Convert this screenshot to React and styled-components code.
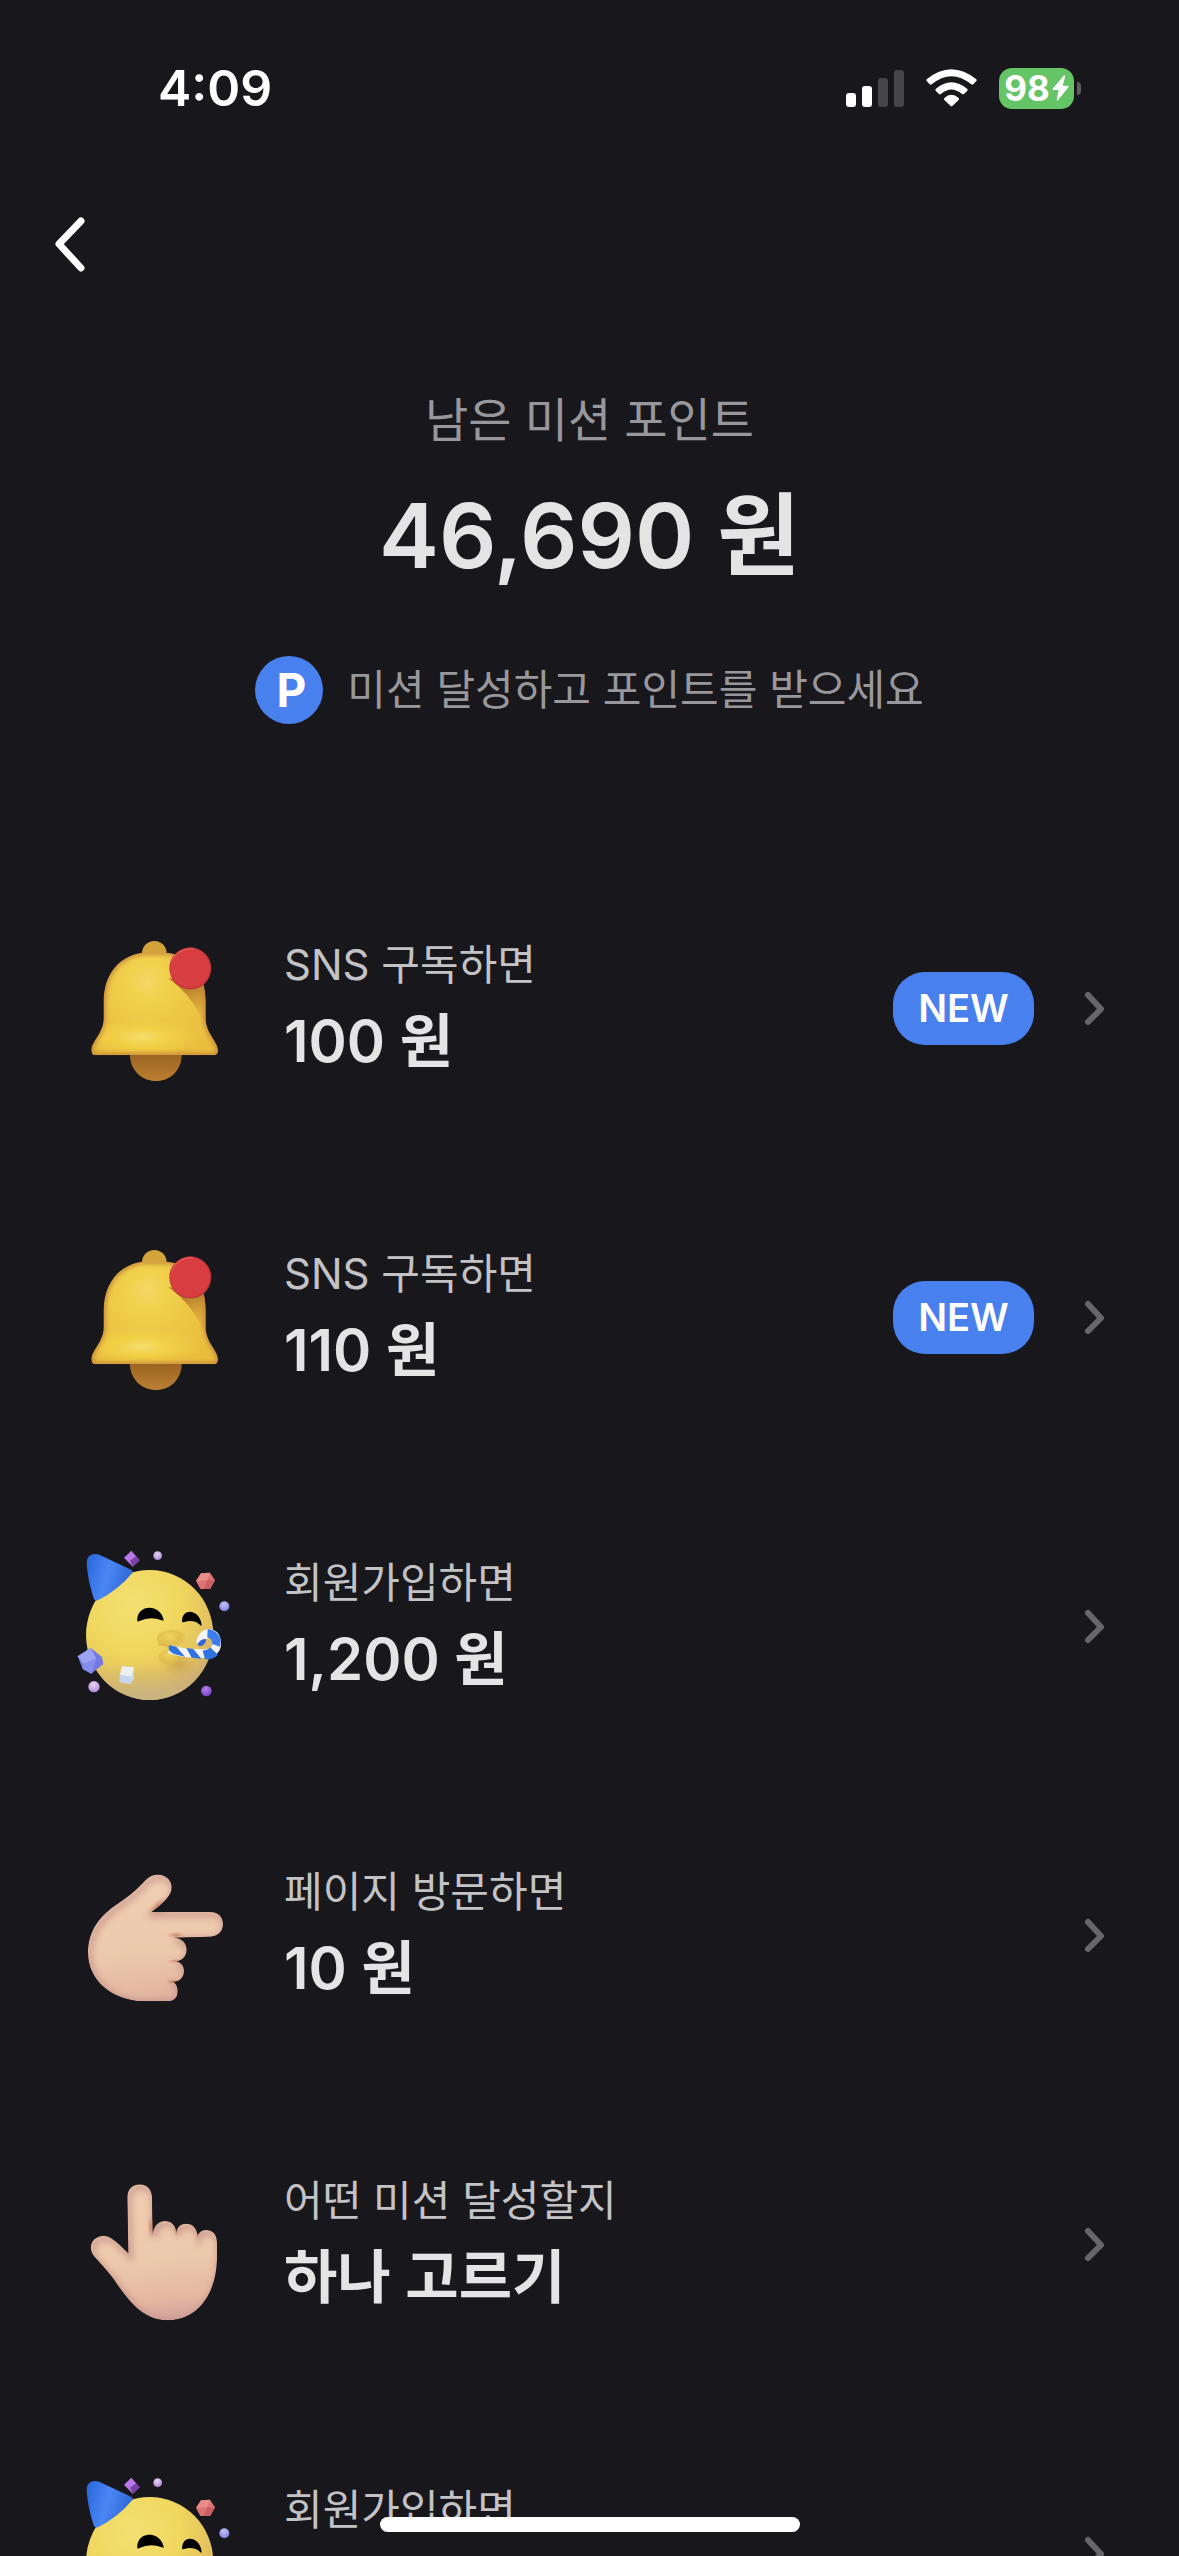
import React from "react";
import styled, { createGlobalStyle } from "styled-components";

const GlobalStyle = createGlobalStyle`
  * { box-sizing: border-box; }
  html, body { margin: 0; background: #18171c; }
  body {
    font-family: Inter, "Noto Sans CJK KR", sans-serif;
    color: #e4e4e4;
    -webkit-font-smoothing: antialiased;
  }
`;

const Screen = styled.div`
  position: relative;
  display: flex;
  flex-direction: column;
  height: 100vh;
  overflow: hidden;
  background: #18171c;
`;

const StatusBar = styled.header`
  display: flex;
  align-items: center;
  justify-content: space-between;
  flex: none;
  height: 176px;
  padding: 0 98px 0 158px;
`;

const Time = styled.time`
  font-size: 50px;
  line-height: 60px;
  font-weight: 600;
  color: #fff;
`;

const StatusIcons = styled.div`
  display: flex;
  align-items: center;
  gap: 22px;
`;

const Signal = styled.div`
  display: flex;
  align-items: flex-end;
  gap: 6px;
  height: 38px;
`;

const SignalBar = styled.span`
  width: 10px;
  height: ${(p) => p.$height}px;
  border-radius: 3px;
  background: ${(p) => (p.$on ? "#fff" : "#464549")};
`;

const Battery = styled.div`
  display: flex;
  align-items: center;
  gap: 3px;
`;

const BatteryBody = styled.div`
  display: flex;
  align-items: center;
  justify-content: center;
  gap: 2px;
  width: 75px;
  height: 41px;
  border-radius: 13px;
  background: #65c466;
  color: #fff;
  font-size: 35px;
  line-height: 41px;
  font-weight: 700;
`;

const BatteryCap = styled.span`
  width: 4px;
  height: 13px;
  border-radius: 0 4px 4px 0;
  background: #5d5c61;
`;

const NavBar = styled.nav`
  display: flex;
  align-items: center;
  flex: none;
  height: 136px;
  padding: 0 30px;
`;

const BackButton = styled.button`
  display: flex;
  align-items: center;
  justify-content: center;
  width: 80px;
  height: 80px;
  padding: 0;
  border: 0;
  background: none;
  cursor: pointer;
`;

const Summary = styled.section`
  display: flex;
  flex-direction: column;
  align-items: center;
  flex: none;
  padding: 72px 40px 130px;
`;

const SummaryTitle = styled.h1`
  margin: 0 0 24px;
  font-size: 47px;
  line-height: 72px;
  font-weight: 400;
  color: #98979b;
`;

const Amount = styled.strong`
  font-size: 90px;
  line-height: 112px;
  font-weight: 600;
`;

const Notice = styled.p`
  display: flex;
  align-items: center;
  gap: 24px;
  margin: 64px 0 0;
  font-size: 42px;
  line-height: 64px;
  color: #98979b;
`;

const PointBadge = styled.span`
  display: flex;
  align-items: center;
  justify-content: center;
  width: 68px;
  height: 68px;
  padding-left: 4px;
  border-radius: 50%;
  background: #4880ee;
  color: #fff;
  font-size: 46px;
  font-weight: 700;
`;

const MissionList = styled.ul`
  flex: 1;
  min-height: 0;
  margin: 0;
  padding: 0;
  overflow-y: auto;
  list-style: none;
  scrollbar-width: none;
`;

const MissionRow = styled.a`
  display: flex;
  align-items: center;
  height: 309px;
  padding: 0 61px 0 70px;
  color: inherit;
  text-decoration: none;
`;

const Artwork = styled.svg`
  flex: none;
  width: 180px;
  height: 180px;
`;

const MissionText = styled.div`
  display: flex;
  flex-direction: column;
  flex: 1;
  min-width: 0;
  min-height: 152px;
  margin-left: 34px;
`;

const MissionLabel = styled.span`
  font-size: 42px;
  line-height: 64px;
  color: #c3c3c6;
`;

const MissionValue = styled.strong`
  font-size: 58px;
  line-height: 88px;
  font-weight: 600;
`;

const NewBadge = styled.span`
  margin-right: 36px;
  width: 141px;
  height: 73px;
  border-radius: 32px;
  background: #4880ee;
  color: #fff;
  font-size: 38px;
  line-height: 72px;
  font-weight: 600;
  text-align: center;
`;

const HomeIndicator = styled.div`
  position: absolute;
  left: 50%;
  bottom: 24px;
  width: 420px;
  height: 15px;
  margin-left: -210px;
  border-radius: 8px;
  background: #fff;
`;

function WifiIcon() {
  return (
    <svg width="51" height="38" viewBox="0 0 153 114" fill="#fff" aria-label="Wi-Fi" role="img">
      <path d="M2 31 Q76 -29 151 31 Q153 34 151 36 L142 46 Q139 48 136 46 Q76 -3 17 46 Q14 48 11 46 L2 36 Q0 34 2 31Z" />
      <path d="M29 60 Q76 20 124 60 Q126 63 124 65 L114 75 Q111 77 108 75 Q76 48 45 75 Q42 77 39 75 L29 65 Q27 63 29 60Z" />
      <path d="M55 87 Q76 68 98 87 Q100 90 98 93 L79 111 Q76 113 74 111 L55 93 Q53 90 55 87Z" />
    </svg>
  );
}

function BoltIcon() {
  return (
    <svg width="17" height="26" viewBox="0 0 51 78" fill="#fff" aria-hidden="true">
      <path d="M36 1 L2 41 Q0 45 4 45 L20 45 L14 75 Q15 79 18 76 L49 37 Q51 32 47 32 L32 32 L40 3 Q39 0 36 1Z" />
    </svg>
  );
}

const BELL =
  "M247 98 H319 C390 103 437 158 437 245 V295 C437 340 474 365 474 391 Q474 406 462 406 H106 Q94 406 94 391 C94 365 131 340 131 295 V245 C131 160 180 107 247 98Z";

function Bell({ id }) {
  const u = (n) => `url(#${id}-${n})`;
  return (
    <Artwork viewBox="30 -3 540 540" aria-hidden="true">
      <defs>
        <radialGradient id={`${id}-body`} gradientUnits="userSpaceOnUse" cx="262" cy="185" r="260">
          <stop offset="0" stopColor="#f4d869" />
          <stop offset=".2" stopColor="#f2d24e" />
          <stop offset=".55" stopColor="#ecc645" />
          <stop offset="1" stopColor="#e9bd3e" />
        </radialGradient>
        <radialGradient id={`${id}-glow`} cx=".5" cy=".5" r=".5">
          <stop offset="0" stopColor="#f7de70" />
          <stop offset=".5" stopColor="#f3d346" stopOpacity=".8" />
          <stop offset="1" stopColor="#f3d346" stopOpacity="0" />
        </radialGradient>
        <linearGradient id={`${id}-shade`} gradientUnits="userSpaceOnUse" x1="395" y1="200" x2="425" y2="320">
          <stop offset="0" stopColor="#b97f2b" />
          <stop offset="1" stopColor="#d9a036" stopOpacity="0" />
        </linearGradient>
        <linearGradient id={`${id}-clap`} x1="0" y1="0" x2="0" y2="1">
          <stop offset="0" stopColor="#98611f" />
          <stop offset="1" stopColor="#bb7f32" />
        </linearGradient>
        <filter id={`${id}-soft`} x="-20%" y="-20%" width="140%" height="140%">
          <feGaussianBlur stdDeviation="7" />
        </filter>
        <clipPath id={`${id}-clip`}>
          <path d={BELL} />
        </clipPath>
      </defs>
      <path d="M210 396 H365 V410 C362 452 330 483 288 483 C246 483 213 452 210 410Z" fill={u("clap")} />
      <circle cx="283" cy="100" r="37" fill="#d3a33c" />
      <g clipPath={u("clip")}>
        <path d={BELL} fill={u("body")} />
        <ellipse cx="245" cy="352" rx="170" ry="55" fill={u("glow")} />
        <path d="M325 175 Q398 225 437 320 V180Z" fill={u("shade")} />
        <path d={BELL} fill="none" stroke="#c4843a" strokeWidth="12" filter={u("soft")} />
      </g>
      <circle cx="391" cy="145" r="63" fill="#b83337" />
      <circle cx="390" cy="145" r="60" fill="#d83d41" />
      <path d="M335 126 A60 60 0 0 1 400 87" fill="none" stroke="#e45856" strokeWidth="4" />
    </Artwork>
  );
}

function PartyFace({ id }) {
  const u = (n) => `url(#${id}-${n})`;
  return (
    <Artwork viewBox="0 21 540 540" aria-hidden="true">
      <defs>
        <radialGradient id={`${id}-face`} gradientUnits="userSpaceOnUse" cx="190" cy="225" r="290">
          <stop offset="0" stopColor="#f4df72" />
          <stop offset=".5" stopColor="#f0d75e" />
          <stop offset=".8" stopColor="#e4c25e" />
          <stop offset="1" stopColor="#cfac70" />
        </radialGradient>
        <linearGradient id={`${id}-low`} x1="0" y1="0" x2="0" y2="1">
          <stop offset=".72" stopColor="#c9b078" stopOpacity="0" />
          <stop offset="1" stopColor="#c9b582" />
        </linearGradient>
        <linearGradient id={`${id}-hat`} x1="0" y1=".3" x2="1" y2=".6">
          <stop offset="0" stopColor="#2d6ade" />
          <stop offset=".45" stopColor="#4a86f4" />
          <stop offset="1" stopColor="#2b64d4" />
        </linearGradient>
        <radialGradient id={`${id}-pink`} cx=".45" cy=".3" r=".7">
          <stop offset="0" stopColor="#e9d7f3" />
          <stop offset="1" stopColor="#b08ad8" />
        </radialGradient>
        <radialGradient id={`${id}-lilac`} cx=".45" cy=".3" r=".7">
          <stop offset="0" stopColor="#c5c5f7" />
          <stop offset="1" stopColor="#7f7fe0" />
        </radialGradient>
        <radialGradient id={`${id}-violet`} cx=".45" cy=".3" r=".7">
          <stop offset="0" stopColor="#b27ceb" />
          <stop offset="1" stopColor="#7a43c4" />
        </radialGradient>
        <radialGradient id={`${id}-lip`} cx=".4" cy=".35" r=".65">
          <stop offset="0" stopColor="#efd45c" />
          <stop offset=".6" stopColor="#e3be50" />
          <stop offset="1" stopColor="#d9b252" stopOpacity="0" />
        </radialGradient>
        <radialGradient id={`${id}-shadow`}>
          <stop offset="0" stopColor="#b8913f" stopOpacity=".5" />
          <stop offset="1" stopColor="#b8913f" stopOpacity="0" />
        </radialGradient>
      </defs>
      <ellipse cx="239" cy="315" rx="191" ry="195" fill={u("face")} />
      <ellipse cx="239" cy="315" rx="191" ry="195" fill={u("low")} />
      <path d="M50 98 C50 76 68 67 88 74 L183 119 Q191 123 186 130 Q145 180 84 211 Q75 214 71 205 Q52 145 50 98Z" fill={u("hat")} />
      <path d="M202 273 C198 224 270 218 281 270 Q281 274 275 271 Q242 257 208 273 Q202 276 202 273Z" fill="#000" />
      <path d="M336 273 C338 230 392 240 395 286 Q393 290 388 283 Q370 268 343 276 Q335 278 336 273Z" fill="#000" />
      <ellipse cx="325" cy="400" rx="52" ry="38" fill={u("shadow")} />
      <ellipse cx="305" cy="328" rx="44" ry="29" fill={u("lip")} />
      <ellipse cx="302" cy="382" rx="37" ry="25" fill={u("lip")} />
      <path d="M266 345 Q285 340 298 350" fill="none" stroke="#c9a03d" strokeWidth="4" strokeLinecap="round" opacity=".5" />
      <path d="M298 357 Q338 370 375 370 C415 374 444 368 440 335 C436 300 396 302 391 340" fill="none" stroke="#f1f4fb" strokeWidth="26" />
      <path d="M298 345 L319 350 L345 380 L312 372 Q290 362 298 345Z" fill="#3272df" />
      <path d="M349 354 L370 357 L394 386 L365 383Z" fill="#3272df" />
      <path d="M398 362 Q413 362 420 352 L444 374 Q431 389 405 388Z" fill="#3272df" />
      <path d="M413 297 Q444 299 452 331 L450 350 L427 342 Q427 326 412 322Z" fill="#3c7cec" />
      <path d="M383 344 Q389 326 409 327 Q407 346 389 349Z" fill="#3464d4" />
      <path d="M184 62 L209 91 L188 110 L162 83Z" fill="#b878ea" />
      <path d="M209 91 L188 110 L180 92 L198 79Z" fill="#7a42a8" />
      <circle cx="263" cy="77" r="13" fill={u("pink")} />
      <path d="M393 130 L420 128 L435 151 L421 176 L391 177 L378 153Z" fill="#dc7473" />
      <path d="M393 130 L420 128 L412 151 L378 153Z" fill="#e98d88" />
      <path d="M412 151 L435 151 L421 176 L402 177Z" fill="#c95f63" />
      <circle cx="463" cy="229" r="15" fill={u("lilac")} />
      <path d="M23 379 L62 354 L96 381 L100 402 L64 431 L38 417Z" fill="#7479e4" />
      <path d="M23 379 L62 354 L79 386 L40 402Z" fill="#9ba3f4" />
      <path d="M40 402 L79 386 L64 431 L38 417Z" fill="#868deb" />
      <path d="M156 409 L192 412 L191 447 L182 462 L149 456 L150 435Z" fill="#d3dcea" />
      <path d="M156 409 L192 412 L184 440 L150 435Z" fill="#eeefee" />
      <path d="M150 435 L184 440 L182 462 L149 456Z" fill="#c6d5ed" />
      <circle cx="72" cy="470" r="17" fill={u("pink")} />
      <circle cx="409" cy="483" r="16" fill={u("violet")} />
    </Artwork>
  );
}

const RIGHT_HAND =
  "M245 186 H422 C447 186 459 203 459 222 C459 243 445 259 422 260 L310 263 C337 263 350 281 350 299 C350 319 336 332 318 334 C334 337 342 349 342 363 C342 384 328 395 310 395 C319 401 323 412 323 424 C323 444 312 454 292 454 H218 C128 450 54 393 54 308 C54 240 92 195 145 160 C185 133 203 115 226 91 C242 74 262 70 281 77 C302 86 311 108 301 130 C291 150 266 170 245 186Z";

const UP_HAND =
  "M175 280 L172 112 C172 88 188 73 209 73 C232 73 246 90 246 112 L248 224 C250 200 264 183 285 183 C305 183 317 197 319 217 C322 200 332 191 348 191 C369 191 380 205 383 226 C388 215 397 210 409 210 C430 210 441 225 441 248 V300 C438 400 385 480 294 481 C222 481 181 428 143 375 C119 338 96 316 74 291 C58 272 59 251 73 238 C89 224 109 224 126 236 C146 250 161 266 175 280Z";

function Hand({ id, viewBox, shape, children }) {
  const u = (n) => `url(#${id}-${n})`;
  return (
    <Artwork viewBox={viewBox} aria-hidden="true">
      <defs>
        <linearGradient id={`${id}-skin`} gradientUnits="userSpaceOnUse" x1="190" y1="130" x2="230" y2="482">
          <stop offset="0" stopColor="#f0cdb1" />
          <stop offset=".5" stopColor="#edc9ac" />
          <stop offset=".82" stopColor="#e4b9a0" />
          <stop offset="1" stopColor="#d3a49d" />
        </linearGradient>
        <radialGradient id={`${id}-crease`}>
          <stop offset="0" stopColor="#c07358" stopOpacity=".8" />
          <stop offset="1" stopColor="#d99b7d" stopOpacity="0" />
        </radialGradient>
        <filter id={`${id}-soft`} x="-20%" y="-20%" width="140%" height="140%">
          <feGaussianBlur stdDeviation="9" />
        </filter>
        <clipPath id={`${id}-clip`}>
          <path d={shape} />
        </clipPath>
      </defs>
      <g clipPath={u("clip")}>
        <path d={shape} fill={u("skin")} />
        <path d={shape} fill="none" stroke="#c08a85" strokeWidth="16" filter={u("soft")} transform="translate(5 8)" opacity=".75" />
        <g fill={u("crease")}>{children}</g>
      </g>
    </Artwork>
  );
}

function HandRight({ id }) {
  return (
    <Hand id={id} viewBox="0 -12 540 540" shape={RIGHT_HAND}>
      <ellipse cx="262" cy="168" rx="42" ry="14" transform="rotate(-42 262 168)" />
      <ellipse cx="318" cy="256" rx="30" ry="11" />
      <ellipse cx="314" cy="333" rx="22" ry="7" />
      <ellipse cx="308" cy="395" rx="22" ry="8" />
    </Hand>
  );
}

function HandUp({ id }) {
  return (
    <Hand id={id} viewBox="0 -15 540 540" shape={UP_HAND}>
      <ellipse cx="243" cy="200" rx="11" ry="36" />
      <ellipse cx="319" cy="214" rx="7" ry="15" />
      <ellipse cx="383" cy="223" rx="7" ry="15" />
    </Hand>
  );
}

function BackIcon() {
  return (
    <svg width="80" height="80" viewBox="0 0 80 80" fill="none" aria-hidden="true">
      <path d="M51 17 L29 40 L51 64" stroke="#fff" strokeWidth="7" strokeLinecap="round" strokeLinejoin="round" />
    </svg>
  );
}

function RowChevron() {
  return (
    <svg width="48" height="48" viewBox="0 0 48 48" fill="none" aria-hidden="true">
      <path d="M18 10 L31 24 L18 37" stroke="#67666d" strokeWidth="6" strokeLinecap="round" strokeLinejoin="round" />
    </svg>
  );
}

const missions = [
  { art: Bell, label: "SNS 구독하면", value: "100 원", isNew: true },
  { art: Bell, label: "SNS 구독하면", value: "110 원", isNew: true },
  { art: PartyFace, label: "회원가입하면", value: "1,200 원" },
  { art: HandRight, label: "페이지 방문하면", value: "10 원" },
  { art: HandUp, label: "어떤 미션 달성할지", value: "하나 고르기" },
  { art: PartyFace, label: "회원가입하면" },
];

export default function App() {
  return (
    <>
      <GlobalStyle />
      <Screen>
        <StatusBar>
          <Time>4:09</Time>
          <StatusIcons>
            <Signal>
              <SignalBar $height={14} $on />
              <SignalBar $height={21} $on />
              <SignalBar $height={29} />
              <SignalBar $height={37} />
            </Signal>
            <WifiIcon />
            <Battery>
              <BatteryBody>
                98
                <BoltIcon />
              </BatteryBody>
              <BatteryCap />
            </Battery>
          </StatusIcons>
        </StatusBar>
        <NavBar>
          <BackButton type="button" aria-label="뒤로">
            <BackIcon />
          </BackButton>
        </NavBar>
        <Summary>
          <SummaryTitle>남은 미션 포인트</SummaryTitle>
          <Amount>46,690 원</Amount>
          <Notice>
            <PointBadge>P</PointBadge>
            미션 달성하고 포인트를 받으세요
          </Notice>
        </Summary>
        <MissionList>
          {missions.map(({ art: Art, label, value, isNew }, i) => (
            <li key={i}>
              <MissionRow href={`#mission-${i + 1}`}>
                <Art id={`art-${i}`} />
                <MissionText>
                  <MissionLabel>{label}</MissionLabel>
                  {value && <MissionValue>{value}</MissionValue>}
                </MissionText>
                {isNew && <NewBadge>NEW</NewBadge>}
                <RowChevron />
              </MissionRow>
            </li>
          ))}
        </MissionList>
        <HomeIndicator />
      </Screen>
    </>
  );
}
